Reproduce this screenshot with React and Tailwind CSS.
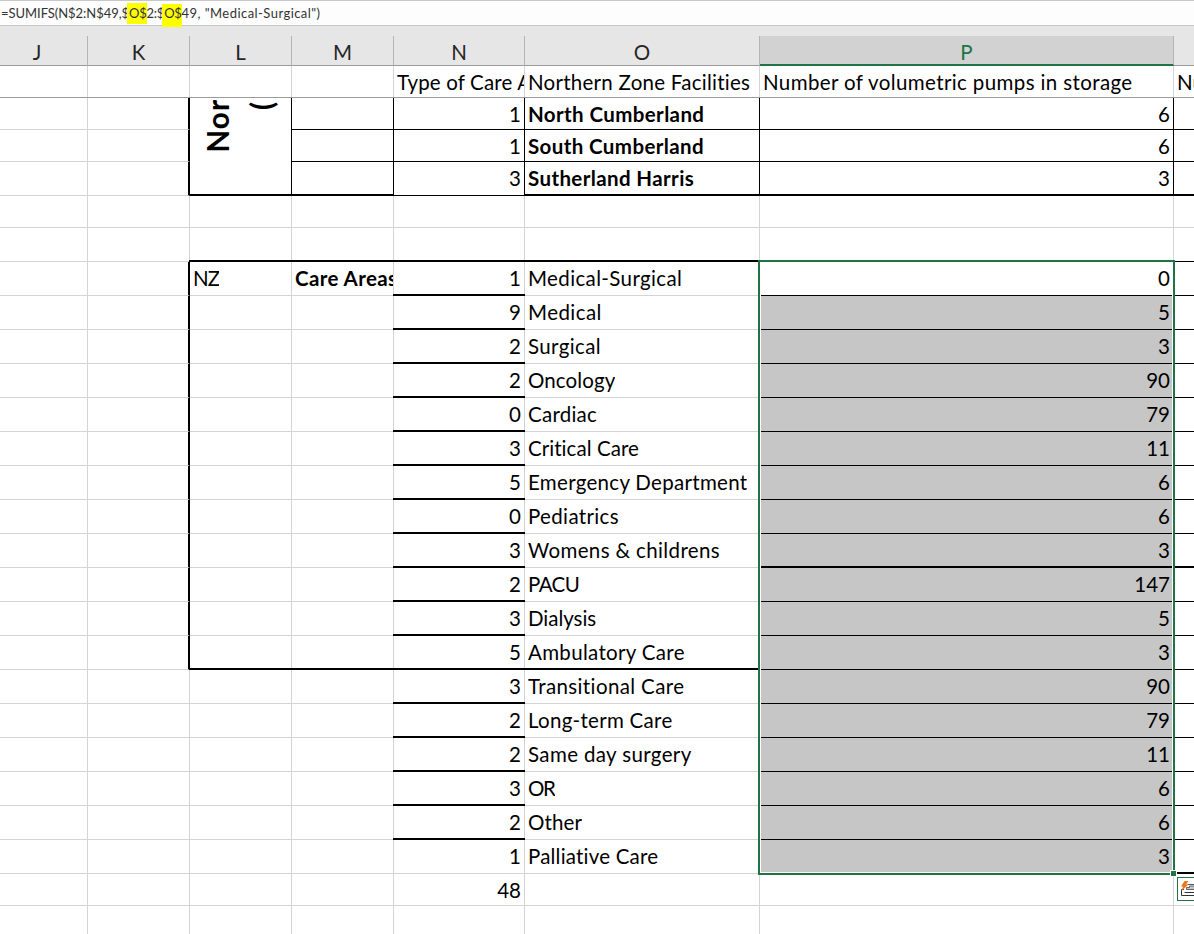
import React from "react";
import clsx from "clsx";

const COLS = "grid grid-cols-[88px_102px_102px_102px_131px_235px_414px_20px]";

const headers = ["J", "K", "L", "M", "N", "O", "P", ""];

const facilities = [
  { count: 1, name: "North Cumberland", pumps: 6 },
  { count: 1, name: "South Cumberland", pumps: 6 },
  { count: 3, name: "Sutherland Harris", pumps: 3 },
];

const careAreas = [
  { count: 1, name: "Medical-Surgical", pumps: 0, track: "tracking-[0.37px]" },
  { count: 9, name: "Medical", pumps: 5, track: "tracking-[0.45px]" },
  { count: 2, name: "Surgical", pumps: 3, track: "tracking-[0.37px]" },
  { count: 2, name: "Oncology", pumps: 90, track: "tracking-[0.1px]" },
  { count: 0, name: "Cardiac", pumps: 79, track: "tracking-[0.25px]" },
  { count: 3, name: "Critical Care", pumps: 11, track: "tracking-[0.06px]" },
  { count: 5, name: "Emergency Department", pumps: 6, track: "tracking-[0.3px]" },
  { count: 0, name: "Pediatrics", pumps: 6, track: "tracking-[0.35px]" },
  { count: 3, name: "Womens & childrens", pumps: 3, track: "tracking-[0.37px]" },
  { count: 2, name: "PACU", pumps: 147, track: "tracking-[-0.6px]" },
  { count: 3, name: "Dialysis", pumps: 5, track: "tracking-[-0.02px]" },
  { count: 5, name: "Ambulatory Care", pumps: 3, track: "tracking-[0.33px]" },
  { count: 3, name: "Transitional Care", pumps: 90, track: "tracking-[0.38px]" },
  { count: 2, name: "Long-term Care", pumps: 79, track: "tracking-[0.28px]" },
  { count: 2, name: "Same day surgery", pumps: 11, track: "tracking-[0.37px]" },
  { count: 3, name: "OR", pumps: 6, track: "tracking-[-1.3px]" },
  { count: 2, name: "Other", pumps: 6, track: "tracking-[0.1px]" },
  { count: 1, name: "Palliative Care", pumps: 3, track: "tracking-[0.2px]" },
];

const GRAY_R = "border-r border-r-[#d4d4d4]";
const GRAY_B = "border-b border-b-[#d4d4d4]";
const THIN_R = "border-r border-r-black";
const THIN_B = "border-b border-b-black";
const THICK_R = "border-r-2 border-r-black";

// A thick rule sits over the cell's own hairlines so that it runs unbroken between columns
function Rule() {
  return <div className="absolute -left-px -right-px -bottom-px h-[2px] bg-black" />;
}

function Cell({ right = GRAY_R, bottom = GRAY_B, thick, className, children }) {
  return (
    <div className={clsx("relative min-w-0 flex items-center whitespace-nowrap", right, bottom, className)}>
      {children !== undefined && children !== false && (
        <span className="overflow-hidden py-[4px]">{children}</span>
      )}
      {thick && <Rule />}
    </div>
  );
}

function EmptyRow({ height, thick }) {
  return (
    <div className={clsx(COLS, height)}>
      {headers.map((h, i) => (
        <Cell
          key={i}
          right={i === 7 ? "" : GRAY_R}
          bottom={thick && i === 7 ? THIN_B : GRAY_B}
          thick={thick && i >= 2 && i <= 6}
        />
      ))}
    </div>
  );
}

function CareRow({ area, index }) {
  const boxed = index < 12;
  const last = index === careAreas.length - 1;
  const boxEnd = index === 11;
  const thickPumps = index === 8;
  return (
    <div className={clsx(COLS, "h-[34px]")}>
      <Cell />
      <Cell right={boxed ? THICK_R : GRAY_R} />
      <Cell thick={boxEnd} className="pl-[3px] tracking-[-0.8px]">{index === 0 && "NZ"}</Cell>
      <Cell thick={boxEnd} className="pl-[3px] font-bold tracking-[0.4px]">{index === 0 && "Care Areas"}</Cell>
      <Cell thick={!last} className="justify-end pr-[3px]">{area.count}</Cell>
      <Cell thick={boxEnd} className={clsx("pl-[3px]", area.track)}>{area.name}</Cell>
      <Cell
        bottom={THIN_B}
        thick={thickPumps}
        className={clsx("justify-end pr-[3px]", index > 0 && "bg-[#c6c6c6]")}
      >
        {area.pumps}
      </Cell>
      <Cell right="" bottom={THIN_B} thick={thickPumps || last} />
    </div>
  );
}

function QuickAnalysis() {
  return (
    <div className="absolute left-[1177px] top-[877px] w-[26px] h-[24px] border border-[#217346] bg-white">
      <svg width="24" height="22" viewBox="0 0 24 22" fill="none">
        <path d="M9.500 6.500h11v3.500" stroke="#555" />
        <path d="M8.500 11.500V9.500h3v-1.500h9v3.500z" fill="#c6c6c6" stroke="#666" />
        <path d="M6 11.500H3.500v6H21v-3H6.500" stroke="#333" />
        <path d="M6.500 3H10.500L8 6.500h2.500L3.500 13l1.500-4.500H3z" fill="#ea7a1c" />
      </svg>
    </div>
  );
}

export default function App() {
  return (
    <div className="relative w-[1194px] h-[934px] overflow-hidden bg-white text-black text-[20.5px] leading-[21px] font-['Lato',sans-serif]">
      {/* Formula bar */}
      <div className="h-[26px] border-t border-b border-[#c6c6c6] bg-[#fdfdfd] flex items-center text-[13px] leading-none text-[#333] whitespace-pre">
        <span className="pl-px relative z-10">
          <span className="tracking-[-0.04px]">=SUMIFS(N$2:N$49,$</span>
          <span className="tracking-[-0.25px]">
            <span className="bg-[#ffff00] -ml-[2px] pl-[2px] pt-[2px] pb-[3px]">O$</span>2:$
            <span className="bg-[#ffff00] -ml-[2px] pl-[2px] pt-[1px] pb-[6px]">O$</span>
          </span>
          <span className="tracking-[0.45px]">49, "Medical-Surgical")</span>
        </span>
      </div>

      {/* Column letters */}
      <div className="h-[40px] pt-[10px] bg-[#e6e6e6] leading-none">
        <div className={clsx(COLS, "h-[30px]")}>
          {headers.map((h, i) => (
            <div
              key={i}
              className={clsx(
                "flex items-center justify-center",
                i < 7 && "border-r border-r-[#b4b4b4]",
                h === "J" && "pr-[13px]",
                h === "P"
                  ? "pt-[5px] bg-[#d2d2d2] text-[#217346] border-b-2 border-b-[#217346]"
                  : "pt-[3px] text-[#262626] border-b border-b-[#9b9b9b]"
              )}
            >
              {h}
            </div>
          ))}
        </div>
      </div>

      {/* Frozen title row */}
      <div className={clsx(COLS, "h-[32px] border-b border-b-[#9b9b9b]")}>
        <Cell bottom="" />
        <Cell bottom="" />
        <Cell bottom="" />
        <Cell bottom="" />
        <Cell bottom="" className="pl-[3px] pt-px tracking-[0.15px]">Type of Care A</Cell>
        <Cell bottom="" className="pl-[3px] pt-px tracking-[0.26px]">Northern Zone Facilities</Cell>
        <Cell bottom="" className="pl-[3px] pt-px tracking-[0.38px]">Number of volumetric pumps in storage</Cell>
        <Cell right="" bottom="" className="pl-[3px] pt-px">Nu</Cell>
      </div>

      {/* Facilities */}
      <div className={clsx(COLS, "grid-rows-[32px_32px_34px]")}>
        <div className={clsx("relative col-start-3 row-start-1 row-span-3 font-bold text-[29.5px]", THIN_R, GRAY_B)}>
          <div className="h-full flex items-end overflow-hidden">
            <span className="[writing-mode:vertical-rl] rotate-180 leading-[44px] mb-[42px] ml-[6px] tracking-[1.1px]">Nor</span>
            <span className="[writing-mode:vertical-rl] rotate-180 leading-[44px] mb-[85px]">(</span>
          </div>
          <Rule />
        </div>
        {facilities.map((f, i) => {
          const end = i === 2;
          const pad = end ? "" : "pt-[2px]";
          return (
            <React.Fragment key={f.name}>
              <Cell className="col-start-1" />
              <Cell right={THICK_R} className="col-start-2" />
              <Cell right={THIN_R} bottom={THIN_B} thick={end} className="col-start-4" />
              <Cell right={THIN_R} bottom={THIN_B} className={clsx("justify-end pr-[3px]", pad)}>{f.count}</Cell>
              <Cell right={THIN_R} bottom={THIN_B} thick={end} className={clsx("pl-[3px] font-bold tracking-[0.39px]", pad)}>{f.name}</Cell>
              <Cell right={THIN_R} bottom={THIN_B} thick={end} className={clsx("justify-end pr-[3px]", pad)}>{f.pumps}</Cell>
              <Cell right="" bottom={THIN_B} thick={end} />
            </React.Fragment>
          );
        })}
      </div>

      <EmptyRow height="h-[32px]" />
      <EmptyRow height="h-[34px]" thick />

      {/* Care areas */}
      {careAreas.map((area, i) => (
        <CareRow key={area.name} area={area} index={i} />
      ))}

      {/* Total */}
      <div className={clsx(COLS, "h-[32px]")}>
        <Cell />
        <Cell />
        <Cell />
        <Cell />
        <Cell className="justify-end pr-[3px] pt-[2px]">48</Cell>
        <Cell />
        <Cell />
        <Cell right="" />
      </div>
      <EmptyRow height="h-[34px]" />

      {/* Selection outline, fill handle and quick analysis button */}
      <div className="absolute left-[758px] top-[260px] w-[417px] h-[615px] border-2 border-[#217346]">
        <div className="h-full border border-t-0 border-white" />
      </div>
      <div className="absolute left-[1170px] top-[870px] w-[7px] h-[7px] bg-[#217346] border border-white" />
      <QuickAnalysis />
    </div>
  );
}
